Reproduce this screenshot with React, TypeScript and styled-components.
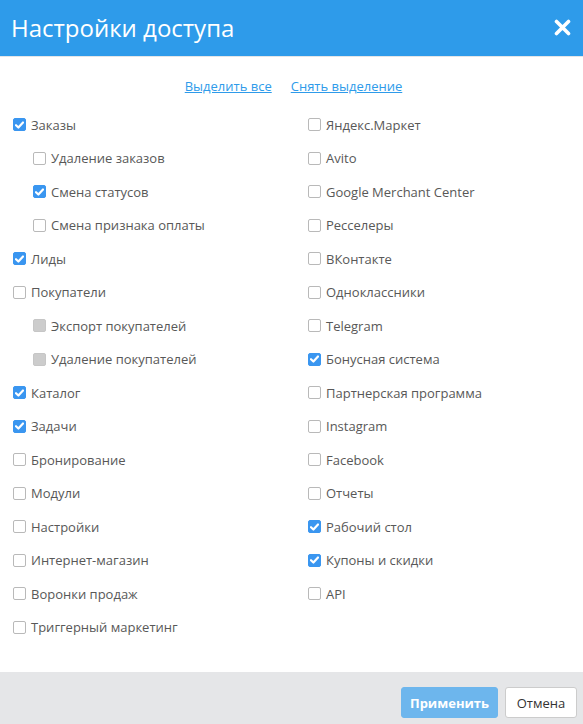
import styled, { createGlobalStyle } from "styled-components";

const GlobalStyle = createGlobalStyle`
  html, body {
    margin: 0;
    padding: 0;
    background: #ffffff;
  }
  body {
    font-family: "Open Sans", "Liberation Sans", sans-serif;
  }
`;

const Modal = styled.div`
  width: 583px;
  height: 724px;
  display: flex;
  flex-direction: column;
  background: #ffffff;
`;

const Header = styled.div`
  flex-shrink: 0;
  background: #2e9bea;
  border-bottom: 1px solid #e3e5e8;
  display: flex;
  align-items: center;
  justify-content: space-between;
  padding: 0 11px 2px 11px;
  box-sizing: content-box;
  height: 54px;
`;

const Title = styled.h1`
  margin: 0;
  font-size: 24px;
  font-weight: 400;
  color: #ffffff;
`;

const CloseButton = styled.button`
  border: none;
  background: transparent;
  padding: 0;
  width: 20px;
  height: 20px;
  display: flex;
  align-items: center;
  justify-content: center;
  cursor: pointer;
`;

const Body = styled.div`
  flex: 1;
  padding: 20px 0 0 13px;
`;

const Links = styled.div`
  display: flex;
  justify-content: center;
  gap: 19px;
  line-height: 18px;
  margin: 0 0 13px -9px;
`;

const Link = styled.a`
  font-size: 13px;
  color: #2e9bea;
  text-decoration: underline;
  cursor: pointer;
`;

const Columns = styled.div`
  display: grid;
  grid-template-columns: 295px 1fr;
`;

const Column = styled.div`
  display: flex;
  flex-direction: column;
`;

const Row = styled.label<{ $indent?: boolean }>`
  height: 33.5px;
  display: flex;
  align-items: center;
  padding-left: ${(p) => (p.$indent ? "20px" : "0")};
  font-size: 13px;
  color: #585858;
  cursor: pointer;
`;

const Box = styled.span<{ $checked?: boolean; $disabled?: boolean }>`
  width: 13px;
  height: 13px;
  box-sizing: border-box;
  border-radius: 2px;
  margin-right: 5px;
  flex-shrink: 0;
  display: flex;
  align-items: center;
  justify-content: center;
  border: 1px solid
    ${(p) => (p.$checked ? "#3a96f0" : p.$disabled ? "#c6c6c6" : "#b9b9b9")};
  background: ${(p) =>
    p.$checked ? "#3a96f0" : p.$disabled ? "#cccccc" : "#ffffff"};
`;

const Footer = styled.div`
  height: 52px;
  flex-shrink: 0;
  background: #e5e6e8;
  display: flex;
  justify-content: flex-end;
  align-items: flex-start;
  gap: 7px;
  padding: 15px 6px 0 0;
  box-sizing: border-box;
`;

const Button = styled.button<{ $primary?: boolean }>`
  height: 31px;
  border-radius: 3px;
  font-family: "Open Sans", "Liberation Sans", sans-serif;
  font-size: 13px;
  font-weight: ${(p) => (p.$primary ? 700 : 400)};
  color: ${(p) => (p.$primary ? "#ffffff" : "#333333")};
  background: ${(p) => (p.$primary ? "#6db6ed" : "#ffffff")};
  border: 1px solid ${(p) => (p.$primary ? "#6db6ed" : "#cccccc")};
  padding: 0;
  width: ${(p) => (p.$primary ? "97px" : "72px")};
  cursor: pointer;
`;

type Item = {
  label: string;
  checked?: boolean;
  disabled?: boolean;
  indent?: boolean;
};

const leftItems: Item[] = [
  { label: "Заказы", checked: true },
  { label: "Удаление заказов", indent: true },
  { label: "Смена статусов", indent: true, checked: true },
  { label: "Смена признака оплаты", indent: true },
  { label: "Лиды", checked: true },
  { label: "Покупатели" },
  { label: "Экспорт покупателей", indent: true, disabled: true },
  { label: "Удаление покупателей", indent: true, disabled: true },
  { label: "Каталог", checked: true },
  { label: "Задачи", checked: true },
  { label: "Бронирование" },
  { label: "Модули" },
  { label: "Настройки" },
  { label: "Интернет-магазин" },
  { label: "Воронки продаж" },
  { label: "Триггерный маркетинг" },
];

const rightItems: Item[] = [
  { label: "Яндекс.Маркет" },
  { label: "Avito" },
  { label: "Google Merchant Center" },
  { label: "Ресселеры" },
  { label: "ВКонтакте" },
  { label: "Одноклассники" },
  { label: "Telegram" },
  { label: "Бонусная система", checked: true },
  { label: "Партнерская программа" },
  { label: "Instagram" },
  { label: "Facebook" },
  { label: "Отчеты" },
  { label: "Рабочий стол", checked: true },
  { label: "Купоны и скидки", checked: true },
  { label: "API" },
];

function CheckRow({ item }: { item: Item }) {
  return (
    <Row $indent={item.indent}>
      <Box $checked={item.checked} $disabled={item.disabled}>
        {item.checked && (
          <svg width="9" height="8" viewBox="0 0 9 8">
            <path
              d="M1 4.2 L3.4 6.5 L8 1.5"
              fill="none"
              stroke="#ffffff"
              strokeWidth="2.2"
              strokeLinecap="round"
              strokeLinejoin="round"
            />
          </svg>
        )}
      </Box>
      {item.label}
    </Row>
  );
}

export default function App() {
  return (
    <>
      <GlobalStyle />
      <Modal>
        <Header>
          <Title>Настройки доступа</Title>
          <CloseButton>
            <svg width="17" height="17" viewBox="0 0 17 17">
              <path
                d="M2.5 2.5 L14.5 14.5 M14.5 2.5 L2.5 14.5"
                stroke="#ffffff"
                strokeWidth="3.6"
                strokeLinecap="round"
              />
            </svg>
          </CloseButton>
        </Header>
        <Body>
          <Links>
            <Link>Выделить все</Link>
            <Link>Снять выделение</Link>
          </Links>
          <Columns>
            <Column>
              {leftItems.map((item) => (
                <CheckRow key={item.label} item={item} />
              ))}
            </Column>
            <Column>
              {rightItems.map((item) => (
                <CheckRow key={item.label} item={item} />
              ))}
            </Column>
          </Columns>
        </Body>
        <Footer>
          <Button $primary>Применить</Button>
          <Button>Отмена</Button>
        </Footer>
      </Modal>
    </>
  );
}
